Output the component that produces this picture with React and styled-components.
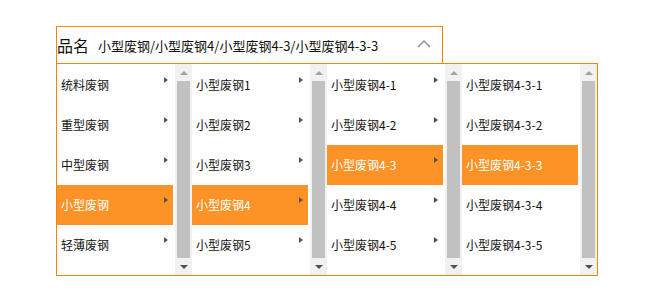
import React from "react";
import styled, { createGlobalStyle } from "styled-components";

const orange = "#f3850f";
const fill = "#fd9226";

const Global = createGlobalStyle`
  body {
    margin: 0;
    background: #fff;
    font-family: "Noto Sans CJK SC", "Liberation Sans", sans-serif;
  }
`;

const Page = styled.div`
  padding: 26px 0 0 56px;
`;

const Header = styled.div`
  box-sizing: border-box;
  width: 387px;
  height: 38px;
  border: 1px solid ${orange};
  display: flex;
  align-items: center;
  padding: 0 11px 0 0;
  color: #111;
`;

const Label = styled.span`
  font-size: 16px;
  margin-right: 9px;
`;

const Value = styled.span`
  flex: 1;
  font-size: 13px;
`;

const Chevron = styled.svg`
  width: 14px;
  height: 8px;
  margin-top: -2px;
`;

const Panel = styled.div`
  box-sizing: border-box;
  width: 542px;
  height: 213px;
  margin-top: -1px;
  border: 1px solid ${orange};
  display: flex;
`;

const Column = styled.div`
  display: flex;
  width: 135px;
  height: 100%;
`;

const List = styled.ul`
  list-style: none;
  margin: 0;
  padding: 1px 0 0;
  width: 118px;
  overflow: hidden;
`;

const Item = styled.li`
  position: relative;
  height: 40px;
  line-height: 40px;
  margin-right: 2px;
  padding-left: 4px;
  font-size: 12px;
  color: ${(p) => (p.$active ? "#fff" : "#111")};
  background: ${(p) => (p.$active ? fill : "transparent")};
  white-space: nowrap;
`;

const Caret = styled.span`
  position: absolute;
  right: 5px;
  top: 12px;
  width: 0;
  height: 0;
  border-top: 3px solid transparent;
  border-bottom: 3px solid transparent;
  border-left: 4px solid #555;
`;

const Scrollbar = styled.div`
  width: 17px;
  height: 100%;
  background: #f1f1f1;
  display: flex;
  flex-direction: column;
`;

const ArrowBox = styled.div`
  height: 17px;
  display: flex;
  align-items: center;
  justify-content: center;
`;

const Arrow = styled.span`
  width: 0;
  height: 0;
  border-left: 4px solid transparent;
  border-right: 4px solid transparent;
  ${(p) =>
    p.$up
      ? `border-bottom: 4px solid #a3a3a3;`
      : `border-top: 4px solid #505050;`}
`;

const Thumb = styled.div`
  flex: 1;
  margin: 0 2px;
  background: #c1c1c1;
`;

const columns = [
  { items: ["统料废钢", "重型废钢", "中型废钢", "小型废钢", "轻薄废钢"], active: 3, caret: true },
  { items: ["小型废钢1", "小型废钢2", "小型废钢3", "小型废钢4", "小型废钢5"], active: 3, caret: true },
  { items: ["小型废钢4-1", "小型废钢4-2", "小型废钢4-3", "小型废钢4-4", "小型废钢4-5"], active: 2, caret: true },
  { items: ["小型废钢4-3-1", "小型废钢4-3-2", "小型废钢4-3-3", "小型废钢4-3-4", "小型废钢4-3-5"], active: 2, caret: false },
];

const App = () => (
  <Page>
    <Global />
    <Header>
      <Label>品名</Label>
      <Value>小型废钢/小型废钢4/小型废钢4-3/小型废钢4-3-3</Value>
      <Chevron viewBox="0 0 14 8">
        <path d="M1 7 L7 1 L13 7" fill="none" stroke="#8a8a8a" strokeWidth="1.4" />
      </Chevron>
    </Header>
    <Panel>
      {columns.map((col, ci) => (
        <Column key={ci}>
          <List>
            {col.items.map((name, i) => (
              <Item key={name} $active={i === col.active}>
                {name}
                {col.caret && <Caret />}
              </Item>
            ))}
          </List>
          <Scrollbar>
            <ArrowBox>
              <Arrow $up />
            </ArrowBox>
            <Thumb />
            <ArrowBox>
              <Arrow />
            </ArrowBox>
          </Scrollbar>
        </Column>
      ))}
    </Panel>
  </Page>
);

export default App;
